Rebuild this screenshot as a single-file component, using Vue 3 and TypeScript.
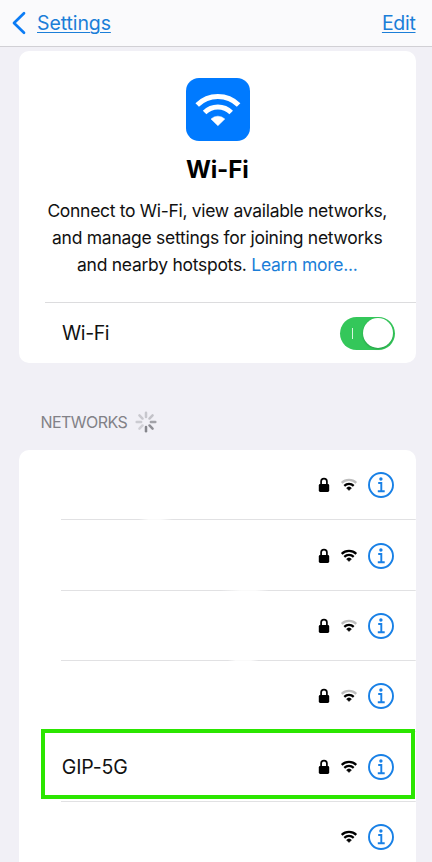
<script setup lang="ts">
import { ref } from 'vue'

interface Network {
  name: string
  locked: boolean
  weak: boolean
  selected: boolean
  fade: string
}

const networks = ref<Network[]>([
  { name: '', locked: true, weak: true, selected: false, fade: 'fade-a' },
  { name: '', locked: true, weak: false, selected: false, fade: 'fade-b' },
  { name: '', locked: true, weak: true, selected: false, fade: 'fade-c' },
  { name: '', locked: true, weak: true, selected: false, fade: '' },
  { name: 'GIP-5G', locked: true, weak: false, selected: true, fade: '' },
  { name: '', locked: false, weak: false, selected: false, fade: '' },
])

const wifiOn = ref(true)
const spokes = [0.38, 0.42, 0.72, 0.9, 1, 0.3, 0.34, 0.36]
</script>

<template>
  <div class="screen">
    <header class="nav">
      <a class="back">
        <svg class="chevron" width="16" height="24" viewBox="0 0 16 24">
          <path d="M13 2.3 3 12 13 21.7" fill="none" stroke="#0b7cf5" stroke-width="2.7" stroke-linecap="round" stroke-linejoin="round" />
        </svg>
        <span class="link settings">Settings</span>
      </a>
      <a class="link edit">Edit</a>
    </header>

    <section class="card intro">
      <div class="about">
        <div class="badge">
          <svg width="64" height="64" viewBox="0 0 64 64" fill="none" stroke="#fff">
            <path d="M11.2 27a29.5 29.5 0 0 1 41.4 0" stroke-width="5" />
            <path d="M18.6 34.5a18.8 18.8 0 0 1 26.6 0" stroke-width="5" />
            <path d="M25 41a9.8 9.8 0 0 1 13.8 0L31.9 47.7Z" fill="#fff" stroke-width="0.5" />
          </svg>
        </div>
        <h1>Wi-Fi</h1>
        <p>
          <span class="l1">Connect to Wi-Fi, view available networks,</span>
          <span class="l2">and manage settings for joining networks</span>
          <span class="l3">and nearby hotspots. <a>Learn more...</a></span>
        </p>
      </div>
      <div class="toggle-row">
        <span class="wifi-label">Wi-Fi</span>
        <button class="switch" :class="{ on: wifiOn }" @click="wifiOn = !wifiOn">
          <i class="mark"></i><i class="knob"></i>
        </button>
      </div>
    </section>

    <div class="heading">
      <span>NETWORKS</span>
      <svg width="22" height="22" viewBox="-11 -11 22 22">
        <line
          v-for="(o, i) in spokes" :key="i"
          x1="0" y1="-4.9" x2="0" y2="-9.3"
          stroke="#85858b" stroke-width="2.5" stroke-linecap="round"
          :opacity="o" :transform="`rotate(${i * 45})`"
        />
      </svg>
    </div>

    <section class="card list">
      <div v-for="(n, i) in networks" :key="i" class="row" :class="[n.fade, { selected: n.selected }]">
        <span class="name">{{ n.name }}</span>
        <svg v-if="n.locked" class="lock" width="12" height="16" viewBox="0 0 12 16">
          <path d="M3.1 8V4.5a2.9 2.9 0 0 1 5.8 0V8" fill="none" stroke="#000" stroke-width="1.7" />
          <rect x="0.8" y="7" width="10.4" height="8" rx="1.4" />
        </svg>
        <svg class="signal" width="18" height="14" viewBox="0 0 18 14" fill="none" stroke="#000">
          <path d="M1.7 4.9a10.4 10.4 0 0 1 14.6 0" stroke-width="2.2" :stroke="n.weak ? '#bebebe' : '#000'" />
          <path d="M4.3 7.9a6.7 6.7 0 0 1 9.4 0" stroke-width="2.2" />
          <path d="M6.5 10.1a3.5 3.5 0 0 1 5 0L9 12.6Z" fill="#000" stroke-width="0.4" />
        </svg>
        <svg class="info" width="28" height="28" viewBox="0 0 28 28">
          <circle cx="14" cy="14" r="12" fill="none" stroke="#1880e6" stroke-width="1.9" />
          <circle cx="13.9" cy="8" r="1.7" fill="#1880e6" />
          <path d="M11.2 12h3.1v8.1M10.8 20.3h6.9" fill="none" stroke="#1880e6" stroke-width="1.9" />
        </svg>
      </div>
    </section>
  </div>
</template>

<style>
body {
  margin: 0;
  background: #f1f1f6;
}
</style>

<style scoped>
.screen {
  box-sizing: border-box;
  width: 432px;
  height: 862px;
  overflow: hidden;
  background: #f1f0f6;
  font-family: Inter, "Liberation Sans", sans-serif;
  color: #111;
}
.nav {
  box-sizing: border-box;
  height: 47px;
  padding: 0 16.5px 0 11px;
  display: flex;
  align-items: center;
  justify-content: space-between;
  background: #fafafc;
  border-bottom: 1px solid #d1d0d5;
}
.back {
  display: flex;
  align-items: center;
  gap: 10px;
}
.chevron {
  display: block;
}
.link {
  color: #1b7ed8;
  font-size: 19px;
  line-height: 24px;
  text-decoration: underline;
  text-decoration-thickness: 1.4px;
  text-underline-offset: 2px;
  white-space: nowrap;
}
.settings {
  font-size: 19.5px;
  letter-spacing: -0.1px;
}
.edit {
  font-size: 19.5px;
  letter-spacing: -0.3px;
}
.card {
  width: 396.5px;
  margin-left: 19px;
  background: #fff;
}
.intro {
  height: 312px;
  margin-top: 4px;
  border-radius: 10px;
}
.about {
  box-sizing: border-box;
  height: 251px;
  padding-top: 27px;
  display: flex;
  flex-direction: column;
  align-items: center;
}
.badge {
  width: 64px;
  height: 63px;
  margin-left: 1px;
  border-radius: 13px;
  background: #007aff;
}
.badge svg {
  display: block;
}
h1 {
  margin: 13px 0 0;
  font-size: 24px;
  line-height: 32px;
  font-weight: 700;
  letter-spacing: -0.1px;
  color: #000;
}
p {
  margin: 11px 0 0;
  display: flex;
  flex-direction: column;
  align-items: center;
  font-size: 17.5px;
  line-height: 27px;
  white-space: nowrap;
}
.l1 {
  letter-spacing: -0.3px;
}
.l2, .l3 {
  letter-spacing: -0.27px;
}
p a {
  color: #1b7ed8;
}
.toggle-row {
  box-sizing: border-box;
  height: 61px;
  margin-left: 25.5px;
  padding: 0 21px 0 17.5px;
  border-top: 1px solid #dcdcde;
  display: flex;
  align-items: center;
  justify-content: space-between;
}
.wifi-label {
  font-size: 19.5px;
  letter-spacing: -0.4px;
}
.switch {
  box-sizing: border-box;
  width: 54.5px;
  height: 33px;
  padding: 1.5px 1.5px 1.5px 11.5px;
  border: 0;
  border-radius: 17px;
  background: #d8d8dc;
  display: flex;
  align-items: center;
  justify-content: space-between;
}
.switch.on {
  background: #34c75a;
}
.mark {
  width: 1.4px;
  height: 11px;
  background: #d8f5df;
}
.knob {
  width: 30px;
  height: 30px;
  border-radius: 50%;
  background: #fff;
  box-shadow: 0 1px 2px rgba(0, 60, 20, 0.3);
}
.heading {
  height: 24px;
  margin: 47px 0 0 40.5px;
  display: flex;
  align-items: center;
  gap: 8px;
  font-size: 16px;
  color: #828187;
}
.heading span {
  letter-spacing: -0.55px;
}
.list {
  height: 420px;
  margin-top: 16px;
  border-radius: 10px 10px 0 0;
}
.row {
  --line: #e1e1e3;
  position: relative;
  box-sizing: border-box;
  height: 70.4px;
  margin-left: 42px;
  padding-right: 21px;
  display: flex;
  align-items: center;
  background: linear-gradient(var(--line), var(--line)) bottom / 100% 1px no-repeat;
}
.row.fade-a {
  background-image: linear-gradient(90deg, var(--line) 78px, #fafafa 88px, #fafafa 100px, var(--line) 112px);
}
.row.fade-b {
  background-image: linear-gradient(90deg, var(--line) 160px, #fafafa 180px, #fafafa 195px, var(--line) 208px);
}
.row.fade-c {
  background-image: linear-gradient(90deg, var(--line) 167px, #fafafa 175px, #fafafa 190px, var(--line) 198px);
}
.row:last-child {
  background: none;
}
.row.selected::before {
  content: "";
  position: absolute;
  box-sizing: border-box;
  left: -20px;
  right: 0.5px;
  top: -2.6px;
  height: 70px;
  border: 4px solid #2be600;
}
.name {
  flex: 1;
  padding-left: 0.7px;
  font-size: 19.5px;
  letter-spacing: -0.1px;
}
.lock {
  margin-right: 10px;
}
.signal {
  margin-right: 9.5px;
}
.info {
  margin-right: -0.5px;
}
</style>
